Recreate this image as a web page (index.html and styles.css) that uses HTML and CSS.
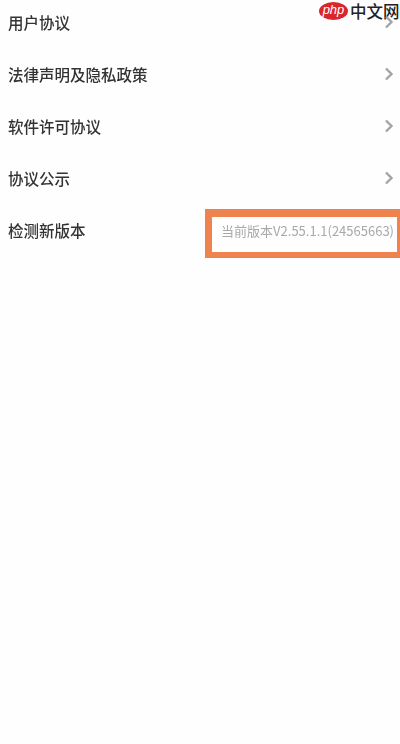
FILE: index.html
```html
<!DOCTYPE html>
<html lang="zh-CN">
<head>
<meta charset="UTF-8" />
<meta name="viewport" content="width=device-width, initial-scale=1.0" />
<title>关于</title>
<link rel="stylesheet" href="styles.css">
</head>
<body>

<div class="watermark">
  <span class="php-badge">php</span>
  <span class="php-name">中文网</span>
</div>

<div class="list">
  <div class="row">
    <span class="label">用户协议</span>
    <svg class="chevron" viewBox="0 0 10 14"><path d="M2 1.5 L7.5 7 L2 12.5" /></svg>
  </div>
  <div class="row">
    <span class="label">法律声明及隐私政策</span>
    <svg class="chevron" viewBox="0 0 10 14"><path d="M2 1.5 L7.5 7 L2 12.5" /></svg>
  </div>
  <div class="row">
    <span class="label">软件许可协议</span>
    <svg class="chevron" viewBox="0 0 10 14"><path d="M2 1.5 L7.5 7 L2 12.5" /></svg>
  </div>
  <div class="row">
    <span class="label">协议公示</span>
    <svg class="chevron" viewBox="0 0 10 14"><path d="M2 1.5 L7.5 7 L2 12.5" /></svg>
  </div>
  <div class="row">
    <span class="label">检测新版本</span>
    <span class="version">当前版本V2.55.1.1(24565663)</span>
  </div>
</div>

<div class="highlight"></div>

</body>
</html>
```

FILE: styles.css
```css
body { margin: 0; height: 744px; overflow: hidden; position: relative; background-color: #fefefe; font-family: "Noto Sans CJK SC", "Liberation Sans", sans-serif; }

.list { margin-top: -4px; filter: blur(0.6px); }
.row { display: flex; align-items: center; justify-content: space-between; height: 52px; padding: 0 6px 0 8px; }
.label { font-size: 15.5px; font-weight: 500; color: #333; }
.chevron { width: 10px; height: 14px; fill: none; stroke: #a4a4a4; stroke-width: 2.4; }
.version { font-size: 13px; color: #a9a9a9; white-space: nowrap; }

/* orange box drawn over the version text */
.highlight { position: absolute; left: 205px; top: 209px; width: 185px; height: 35px; border-style: solid; border-color: #ee8350; border-width: 8px 3px 6px 7px; filter: blur(0.4px); }

.watermark { position: absolute; left: 319px; top: 2px; display: flex; align-items: center; gap: 2px; }
.php-badge { width: 29px; height: 18px; border-radius: 50%; background-color: #d9262c; color: #fff; font-family: "Liberation Sans", sans-serif; font-size: 13px; font-style: italic; line-height: 16px; text-align: center; }
.php-name { font-size: 16.5px; font-weight: 500; line-height: 18px; color: #222; white-space: nowrap; }
```
